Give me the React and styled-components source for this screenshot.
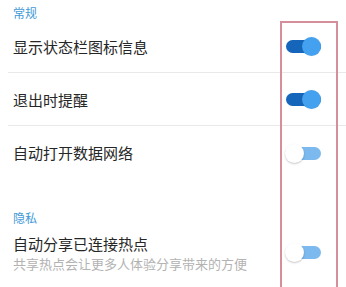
import styled, { createGlobalStyle } from "styled-components";

const GlobalStyle = createGlobalStyle`
  html, body {
    margin: 0;
    padding: 0;
    background: #ffffff;
  }
  body {
    font-family: "Noto Sans CJK SC", "Noto Sans", sans-serif;
  }
`;

const Page = styled.div`
  position: relative;
  width: 346px;
  height: 287px;
  overflow: hidden;
  background: #ffffff;
`;

const SectionTitle = styled.div`
  display: flex;
  align-items: flex-end;
  height: ${(p) => p.height}px;
  padding-left: 13px;
  font-size: 12px;
  line-height: 16px;
  color: #3f9ad8;
  box-sizing: border-box;
  padding-bottom: ${(p) => p.bottom}px;
`;

const Row = styled.div`
  display: flex;
  align-items: center;
  justify-content: space-between;
  height: ${(p) => p.height || 53}px;
  margin-left: 8px;
  padding-left: 5px;
  padding-right: 25px;
  box-sizing: border-box;
  border-bottom: ${(p) => (p.divider ? "1px solid #e9e9e9" : "none")};
`;

const Texts = styled.div`
  display: flex;
  flex-direction: column;
`;

const Label = styled.div`
  font-size: 15px;
  line-height: 21px;
  color: #262626;
`;

const Hint = styled.div`
  font-size: 13px;
  line-height: 19px;
  color: #b3b3b3;
`;

const Switch = styled.div`
  position: relative;
  width: 36px;
  height: 19px;
  flex-shrink: 0;
  margin-top: ${(p) => p.offset || 0}px;
`;

const Track = styled.div`
  position: absolute;
  left: ${(p) => (p.on ? 1 : 2)}px;
  right: 0;
  top: 3px;
  height: 13px;
  border-radius: 7px;
  background: ${(p) => (p.on ? "#1566bb" : "#7bb9ef")};
`;

const Thumb = styled.div`
  position: absolute;
  top: 0;
  left: ${(p) => (p.on ? 17 : 0)}px;
  width: 19px;
  height: 19px;
  border-radius: 50%;
  background: ${(p) => (p.on ? "#44a1f0" : "#ffffff")};
  box-shadow: ${(p) =>
    p.on ? "0 0 1px rgba(0,0,0,0.15)" : "0 1px 2px rgba(0,0,0,0.22)"};
`;

const Marker = styled.div`
  position: absolute;
  left: 280px;
  top: 21px;
  width: 58px;
  height: 300px;
  border: 2px solid #d68f9a;
  box-sizing: border-box;
  pointer-events: none;
`;

function Toggle({ on, offset }) {
  return (
    <Switch offset={offset}>
      <Track on={on} />
      <Thumb on={on} />
    </Switch>
  );
}

export default function App() {
  return (
    <Page>
      <GlobalStyle />
      <SectionTitle height={21} bottom={0}>
        常规
      </SectionTitle>
      <Row divider height={52}>
        <Label>显示状态栏图标信息</Label>
        <Toggle on />
      </Row>
      <Row divider>
        <Label>退出时提醒</Label>
        <Toggle on />
      </Row>
      <Row height={53}>
        <Label>自动打开数据网络</Label>
        <Toggle offset={2} />
      </Row>
      <SectionTitle height={47} bottom={0}>
        隐私
      </SectionTitle>
      <Row height={53}>
        <Texts>
          <Label>自动分享已连接热点</Label>
          <Hint>共享热点会让更多人体验分享带来的方便</Hint>
        </Texts>
        <Toggle />
      </Row>
      <Marker />
    </Page>
  );
}
